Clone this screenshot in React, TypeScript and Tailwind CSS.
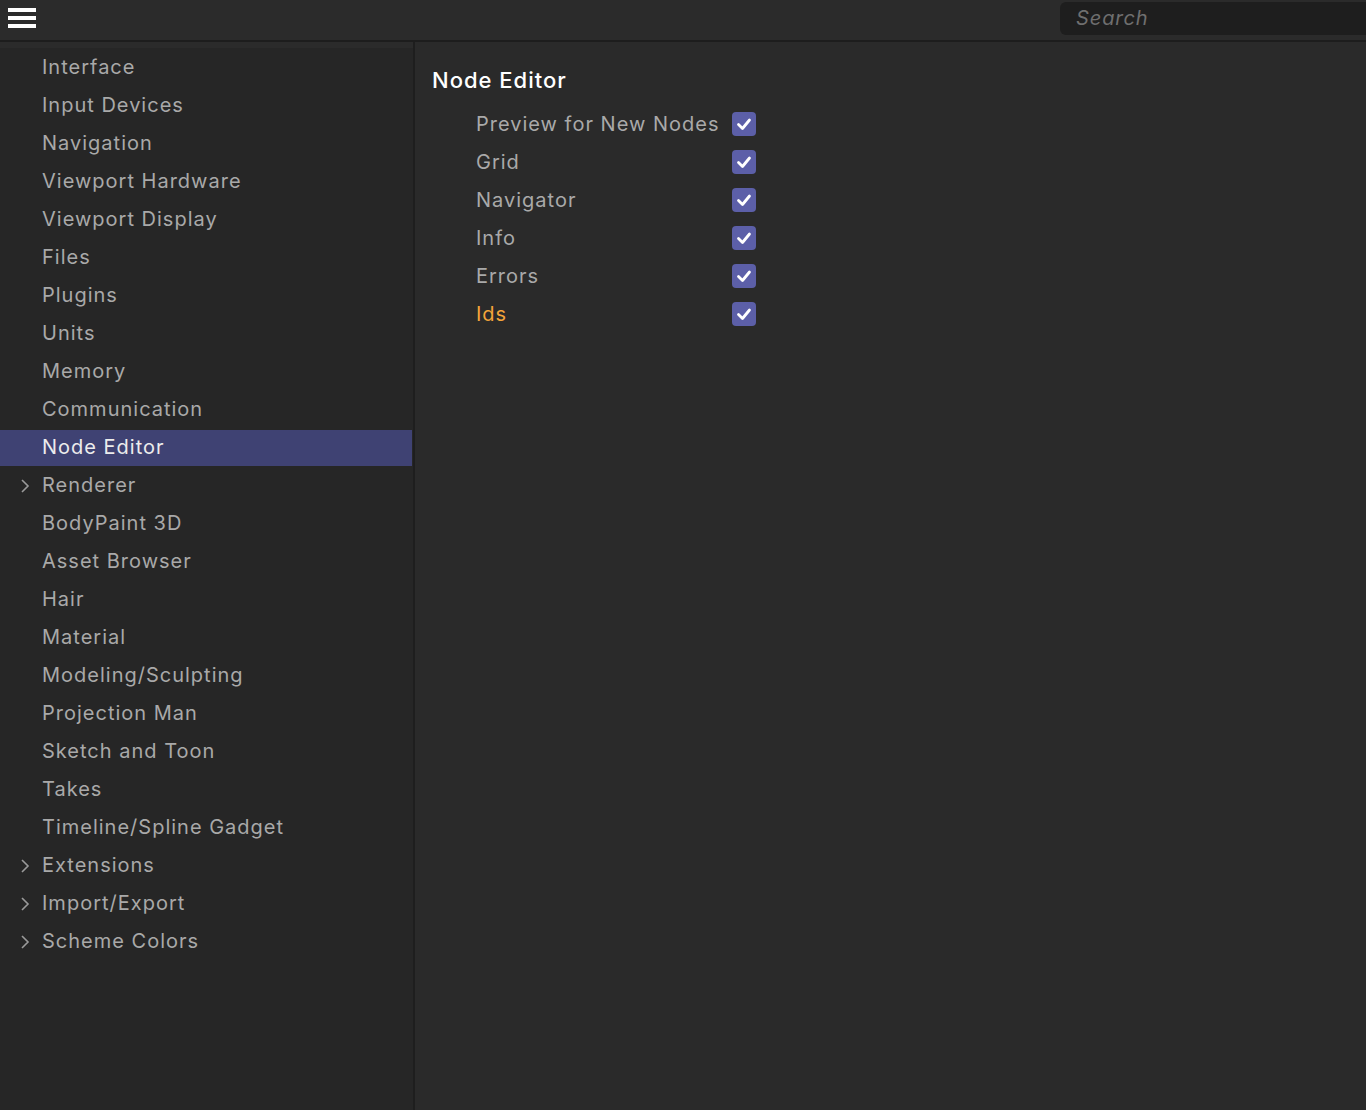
const sections = [
  { label: "Interface" },
  { label: "Input Devices" },
  { label: "Navigation" },
  { label: "Viewport Hardware" },
  { label: "Viewport Display" },
  { label: "Files" },
  { label: "Plugins" },
  { label: "Units" },
  { label: "Memory" },
  { label: "Communication" },
  { label: "Node Editor", active: true },
  { label: "Renderer", sub: true },
  { label: "BodyPaint 3D" },
  { label: "Asset Browser" },
  { label: "Hair" },
  { label: "Material" },
  { label: "Modeling/Sculpting" },
  { label: "Projection Man" },
  { label: "Sketch and Toon" },
  { label: "Takes" },
  { label: "Timeline/Spline Gadget" },
  { label: "Extensions", sub: true },
  { label: "Import/Export", sub: true },
  { label: "Scheme Colors", sub: true },
];

const options = [
  { label: "Preview for New Nodes" },
  { label: "Grid" },
  { label: "Navigator" },
  { label: "Info" },
  { label: "Errors" },
  { label: "Ids", changed: true },
];

const Chevron = () => (
  <svg width="10" height="16" viewBox="0 0 10 16" className="text-[#9a9a9a]">
    <polyline points="2,2 8,8 2,14" fill="none" stroke="currentColor" strokeWidth="1.6" />
  </svg>
);

const Tick = () => (
  <svg width="24" height="24" viewBox="0 0 24 24">
    <polyline
      points="6.5,12.5 10.5,16.5 17.5,8"
      fill="none"
      stroke="white"
      strokeWidth="2.8"
      strokeLinecap="round"
      strokeLinejoin="round"
    />
  </svg>
);

export default function App() {
  return (
    <div
      className="h-[1110px] flex flex-col bg-[#2b2b2b] overflow-hidden"
      style={{ fontFamily: "Inter, 'Noto Sans', sans-serif" }}
    >
      {/* Top bar */}
      <div className="h-[42px] flex items-start justify-between border-b-2 border-[#1d1d1d] bg-[#2b2b2b]">
        <button className="mt-[8px] ml-[8px] flex flex-col gap-[4px]">
          <span className="block w-[28px] h-[4px] bg-white" />
          <span className="block w-[28px] h-[4px] bg-white" />
          <span className="block w-[28px] h-[4px] bg-white" />
        </button>
        <div className="mt-[2px] w-[320px] h-[33px] -mr-[14px] rounded-[6px] bg-[#1e1e1e] flex items-center pl-[16px] pb-[2px]">
          <span className="italic text-[20px] tracking-[0.9px] text-[#6f6f6f]">Search</span>
        </div>
      </div>

      <div className="flex-1 flex min-h-0">
        {/* Sidebar */}
        <div className="w-[413px] pt-[6px] flex flex-col">
          <div className="flex-1 bg-[#262626]">
            {sections.map((s) => (
              <div key={s.label} className="h-[38px] pt-[2px] pr-[1px]">
                <div
                  className={`h-[36px] flex items-center pb-[2px] text-[20px] tracking-[1px] ${
                    s.active ? "bg-[#3f4273] text-[#ececec]" : "text-[#a9a9a9]"
                  }`}
                >
                  <div className="w-[42px] flex justify-end pr-[12px] pt-[2px]">{s.sub && <Chevron />}</div>
                  <span>{s.label}</span>
                </div>
              </div>
            ))}
          </div>
        </div>

        <div className="w-[2px] bg-[#1e1e1e]" />

        {/* Content */}
        <div className="flex-1 bg-[#2a2a2a] pl-[17px] pt-[19px]">
          <div className="h-[38px] flex items-center text-[22px] tracking-[1px] font-medium text-white">
            Node Editor
          </div>
          <div className="mt-[6px] pl-[44px] flex flex-col">
            {options.map((o) => (
              <div key={o.label} className="h-[38px] flex items-center">
                <span
                  className={`w-[256px] text-[20px] tracking-[1px] ${
                    o.changed ? "text-[#f4a43a]" : "text-[#a9a9a9]"
                  }`}
                >
                  {o.label}
                </span>
                <span className="w-[24px] h-[24px] rounded-[4px] bg-[#5c5fa8] flex items-center justify-center">
                  <Tick />
                </span>
              </div>
            ))}
          </div>
        </div>
      </div>
    </div>
  );
}
